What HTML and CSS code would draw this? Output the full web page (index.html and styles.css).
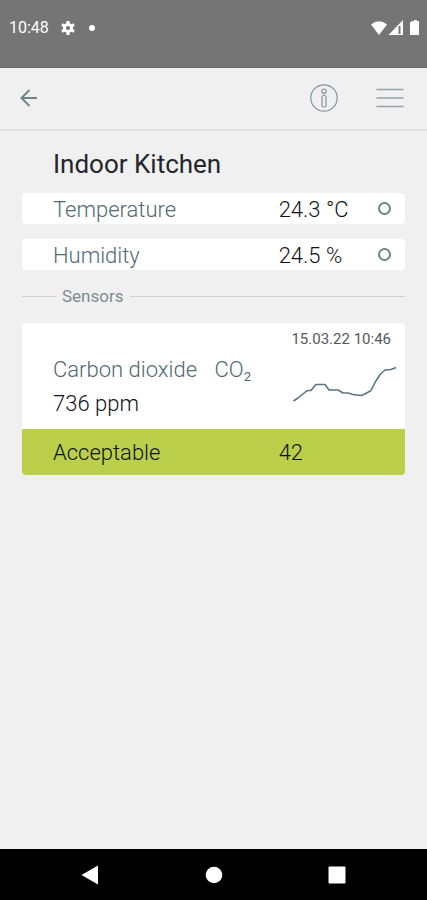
FILE: index.html
```html
<!DOCTYPE html>
<html lang="en">
<head>
    <meta charset="UTF-8">
    <meta name="viewport" content="width=device-width, initial-scale=1.0">
    <title>Indoor Kitchen</title>
    <link rel="stylesheet" href="styles.css">
</head>
<body>
    <div class="status-bar">
        <span class="clock">10:48</span>
        <svg class="gear" width="14" height="14" viewBox="0 0 14 14">
            <circle cx="7" cy="7" r="3.6" fill="none" stroke="#fff" stroke-width="3"/>
            <path d="M7 0v3M7 11v3M1 3.500l2.500 1.500M10.500 9l2.500 1.500M1 10.500l2.500-1.500M10.500 5l2.500-1.500" stroke="#fff" stroke-width="3.200"/>
        </svg>
        <span class="dot"></span>
        <svg class="signals" width="49" height="16" viewBox="0 0 49 16">
            <path d="M0 4.500Q8 -2 16 4.500L8 15z" fill="#fff"/>
            <path d="M32 0v15H17.500z" fill="#fff"/>
            <path d="M28.500 6v8" stroke="#757575" stroke-width="2"/>
            <path d="M41 1h2V0h3v1h2v14h-9V2.500z" fill="#fff"/>
        </svg>
    </div>

    <header class="toolbar">
        <button class="icon-button" type="button" aria-label="Back">
            <svg width="18" height="18" viewBox="0 0 18 18">
                <path d="M17 9H1.500M9.500 1L1.500 9l8 8" fill="none" stroke="#6f858d" stroke-width="2"/>
            </svg>
        </button>
        <button class="icon-button info" type="button" aria-label="Info">
            <svg width="28" height="28" viewBox="0 0 28 28" fill="none" stroke="#82959c" stroke-width="1.200">
                <circle cx="14" cy="14" r="13.200"/>
                <circle cx="14" cy="7.200" r="2.200"/>
                <rect x="12" y="11.500" width="4" height="11.500" rx="1.500"/>
            </svg>
        </button>
        <button class="icon-button" type="button" aria-label="Menu">
            <svg width="28" height="20" viewBox="0 0 28 20">
                <path d="M0.500 1.500h27M0.500 10h27M0.500 18.500h27" stroke="#95a4a9" stroke-width="1.400"/>
            </svg>
        </button>
    </header>

    <main class="content">
        <h1>Indoor Kitchen</h1>

        <div class="reading">
            <span class="label">Temperature</span>
            <span class="value">24.3 °C</span>
            <span class="ring"></span>
        </div>
        <div class="reading">
            <span class="label">Humidity</span>
            <span class="value">24.5 %</span>
            <span class="ring"></span>
        </div>

        <h2 class="divider">Sensors</h2>

        <section class="card">
            <time class="date" datetime="2022-03-15T10:46">15.03.22 10:46</time>
            <div class="sensor">
                <div>
                    <p class="label">Carbon dioxide <span class="formula">CO₂</span></p>
                    <p class="value">736 ppm</p>
                </div>
                <svg class="chart" width="104" height="36" viewBox="0 0 104 36">
                    <path d="M0.500 35L5 32L13 25.500L15 24.500H18L22 19.500L23 18.500H32L36 24H45L50 27L55 27L60 28.500L68 29.500L72 28L78 24.500L82 16.500L87 8.500L92 4L98 3.500L103 1.500" fill="none" stroke="#5b7682" stroke-width="1.600" stroke-linejoin="round"/>
                </svg>
            </div>
            <div class="rating">
                <span>Acceptable</span>
                <span>42</span>
            </div>
        </section>
    </main>

    <nav class="nav-bar">
        <button class="icon-button" type="button" aria-label="Back">
            <svg width="18" height="20" viewBox="0 0 18 20"><path d="M0.500 10L17 0.500v19z" fill="#fff"/></svg>
        </button>
        <button class="icon-button" type="button" aria-label="Home">
            <svg width="18" height="18" viewBox="0 0 18 18"><circle cx="9" cy="9" r="8.300" fill="#fff"/></svg>
        </button>
        <button class="icon-button" type="button" aria-label="Recent apps">
            <svg width="18" height="18" viewBox="0 0 18 18"><rect x="0.500" y="0.500" width="17" height="17" rx="1" fill="#fff"/></svg>
        </button>
    </nav>
</body>
</html>
```

FILE: styles.css
```css
* {
    box-sizing: border-box;
}

body {
    display: flex;
    flex-direction: column;
    min-height: 100vh;
    margin: 0;
    background-color: #f0f0f0;
    color: #101218;
    font-family: Roboto, "Liberation Sans", sans-serif;
    font-size: 22px;
    font-weight: 300;
    line-height: 28px;
}

h1, h2, p {
    margin: 0;
    font-weight: 400;
}

p {
    font-weight: 300;
}

svg {
    display: block;
}

.status-bar {
    display: flex;
    align-items: center;
    height: 68px;
    padding: 0 7px 12px 9px;
    border-bottom: 1px solid #686868;
    background-color: #757575;
    color: #fff;
}

.clock {
    font-size: 16px;
    font-weight: 400;
}

.gear {
    margin-left: 12px;
}

.dot {
    width: 6px;
    height: 6px;
    margin-left: 14px;
    border-radius: 50%;
    background-color: #fff;
}

.signals {
    margin-left: auto;
}

/* Toolbar */
.toolbar {
    display: flex;
    align-items: center;
    height: 63px;
    padding: 0 23px 2px 20px;
    border-bottom: 2px solid #dedfdf;
}

.icon-button {
    padding: 0;
    border: none;
    background: none;
    cursor: pointer;
}

.info {
    margin-left: auto;
    margin-right: 38px;
}

.content {
    flex: 1;
    padding: 16px 22px;
}

h1 {
    margin-bottom: 12px;
    padding-left: 31px;
    color: #24262c;
    font-size: 26px;
    line-height: 34px;
}

.reading {
    display: grid;
    grid-template-columns: 2fr 1fr;
    column-gap: 4px;
    align-items: center;
    position: relative;
    margin-bottom: 15px;
    padding-top: 3px;
    border-radius: 4px;
    background-color: #fff;
}

.label {
    color: #4f6b74;
}

.reading .label {
    padding-left: 31px;
}

.ring {
    position: absolute;
    right: 14px;
    width: 13px;
    height: 13px;
    border: 2px solid #6b838b;
    border-radius: 50%;
}

.divider {
    display: flex;
    align-items: center;
    gap: 6px;
    color: #7d8c91;
    font-size: 17px;
    line-height: 22px;
}

.divider::before,
.divider::after {
    content: "";
    width: 34px;
    height: 1px;
    background-color: #cdd1d2;
}

.divider::after {
    flex: 1;
}

/* Sensor card */
.card {
    margin-top: 16px;
    border-radius: 4px;
    background-color: #fff;
    overflow: hidden;
}

.date {
    display: block;
    padding: 6px 14px 0 0;
    color: #54585c;
    font-size: 15px;
    font-weight: 400;
    line-height: 20px;
    text-align: right;
}

.sensor {
    display: flex;
    justify-content: space-between;
    padding: 4px 8px 8px 31px;
    line-height: 34px;
}

.formula {
    margin-left: 12px;
}

.chart {
    margin-top: 13px;
}

.rating {
    display: grid;
    grid-template-columns: 2fr 1fr;
    column-gap: 4px;
    padding: 10px 0 8px;
    background-color: #bbcf4b;
}

.rating span:first-child {
    padding-left: 31px;
}

.nav-bar {
    display: flex;
    align-items: center;
    justify-content: space-between;
    height: 51px;
    padding: 0 81px;
    background-color: #000;
}
```
